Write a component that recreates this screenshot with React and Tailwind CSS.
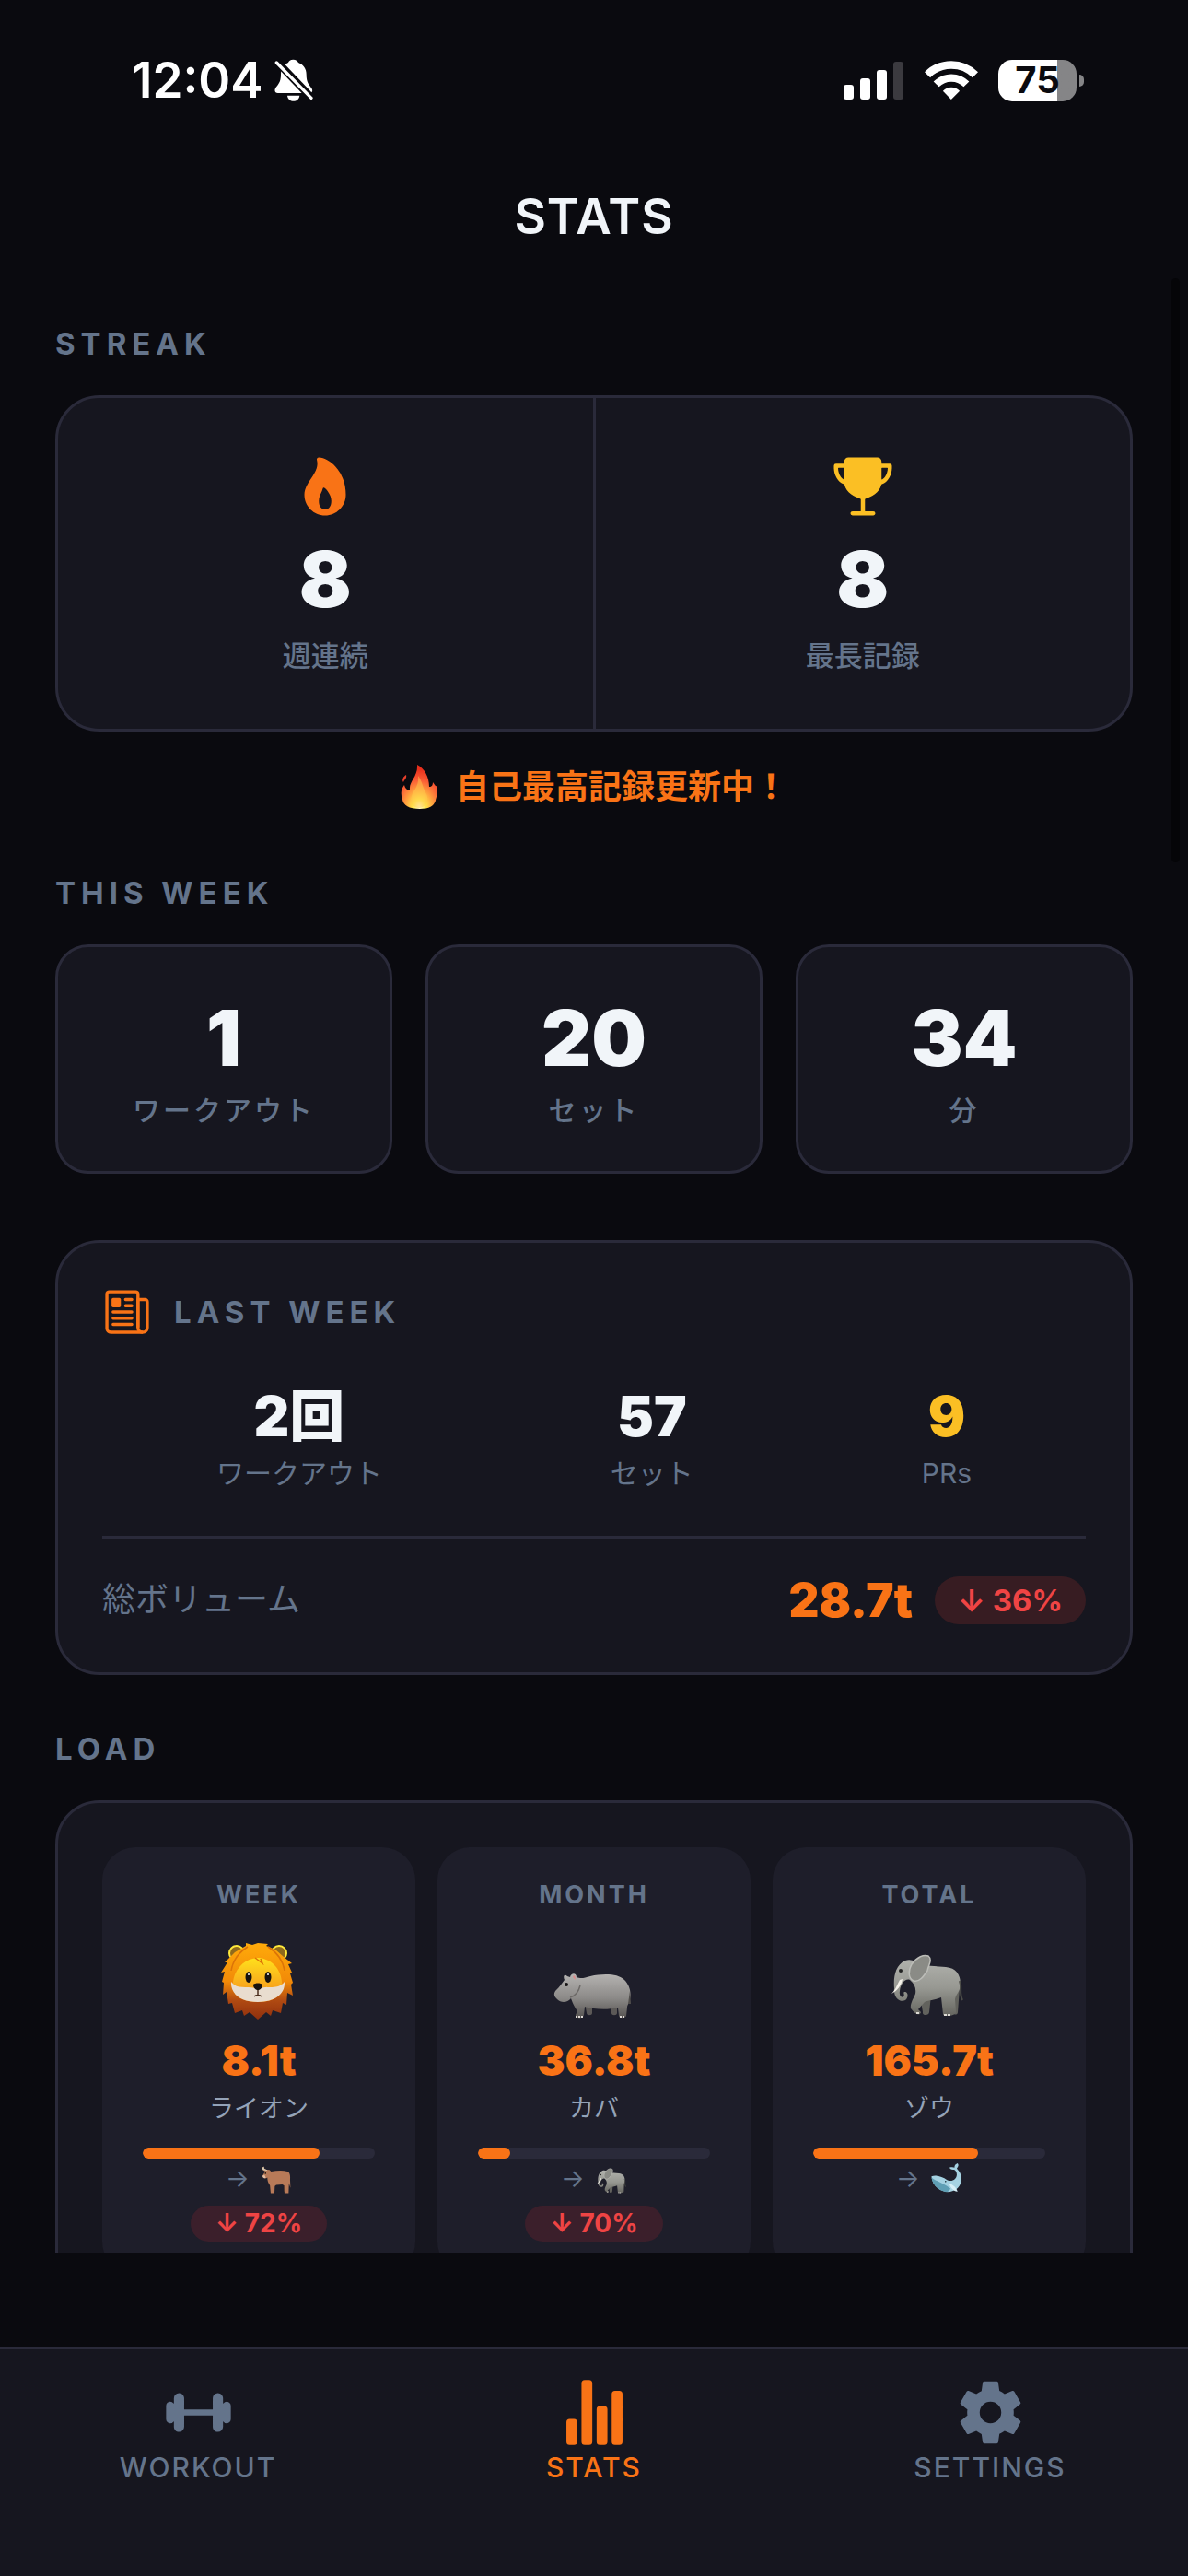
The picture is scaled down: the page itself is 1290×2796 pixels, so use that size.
import {
  IoFlame,
  IoTrophy,
  IoNewspaperOutline,
  IoBarbell,
  IoStatsChart,
  IoSettingsSharp,
} from "react-icons/io5";

const BellOff = () => (
  <svg viewBox="0 0 126 138" className="h-[46px] w-[42px]" aria-hidden="true">
    <path
      d="M61 2 C52 2 47 6 45 12 C29 19 21 32 21 50 C21 76 12 82 4 94 C-2 104 3 111 11 111 H113 C124 111 126 103 121 95 C112 82 104 76 104 50 C104 32 95 19 78 12 C75 6 70 2 61 2 Z"
      fill="#fff"
    />
    <path d="M42 119 H82 C80 131 72 137 62 137 C52 137 44 131 42 119 Z" fill="#fff" />
    <path d="M-4 -4 L132 138" stroke="#0a0a0f" strokeWidth="25" />
    <path d="M7 12 L120 127" stroke="#fff" strokeWidth="10" strokeLinecap="round" />
  </svg>
);

const Signal = () => (
  <svg viewBox="0 0 65 41" className="h-[41px] w-[65px]" aria-hidden="true">
    <rect x="0" y="25" width="11" height="16" rx="3" fill="#fff" />
    <rect x="18" y="18" width="11" height="23" rx="3" fill="#fff" />
    <rect x="36" y="9" width="11" height="32" rx="3" fill="#fff" />
    <rect x="54" y="0" width="11" height="41" rx="3" fill="#3b3a3f" />
  </svg>
);

const Wifi = () => (
  <svg viewBox="0 0 175 127" className="h-[42px] w-[58px]" aria-hidden="true">
    <path d="M9 46 A111 111 0 0 1 166 46" fill="none" stroke="#fff" strokeWidth="26" />
    <path d="M38 77 A69 69 0 0 1 137 77" fill="none" stroke="#fff" strokeWidth="25" />
    <path d="M87 127 L60 99 A38 38 0 0 1 115 99 Z" fill="#fff" />
  </svg>
);

const Lion = ({ className }) => (
  <svg viewBox="0 0 80 84" className={className} role="img" aria-label="Lion">
    <defs>
      <linearGradient id="mane" x1="0" y1="0" x2="0" y2="1">
        <stop offset="0" stopColor="#ffab0a" />
        <stop offset="0.5" stopColor="#f28a08" />
        <stop offset="0.75" stopColor="#b04a12" />
        <stop offset="1" stopColor="#8f2f0d" />
      </linearGradient>
      <linearGradient id="lionFace" x1="0" y1="0" x2="0" y2="1">
        <stop offset="0" stopColor="#ffe11c" />
        <stop offset="0.6" stopColor="#f9ab1c" />
        <stop offset="1" stopColor="#f08c14" />
      </linearGradient>
    </defs>
    <circle cx="18" cy="12" r="8" fill="#8f6a1c" stroke="#ffe93b" strokeWidth="2" />
    <circle cx="64" cy="12" r="8" fill="#8f6a1c" stroke="#ffe93b" strokeWidth="2" />
    <path
      d="M28 1 L35 3 L41 1 L52 2 L50 4 L60 8 L69 16 L78 23 L74 24 L78 33 L76 34 L79 44 L77 46 L79 58 L73 55 L72 68 L68 66 L66 77 L57 74 L55 80 L50 76 L41 84 L32 76 L26 80 L24 74 L16 77 L13 66 L9 67 L7 54 L3 57 L4 44 L2 43 L5 32 L1 33 L8 22 L5 22 L16 11 L28 4 Z"
      fill="url(#mane)"
    />
    <path
      d="M41 17 C57 18 66 30 67 43 C70 58 58 65 41 65 C24 65 11 58 14 43 C16 29 26 18 41 17 Z"
      fill="url(#lionFace)"
    />
    <path
      d="M12 43 C20 53 30 46 41 51 C52 46 62 53 70 43 C71 56 60 65 41 65 C22 65 11 56 12 43 Z"
      fill="#e9ddcf"
    />
    <ellipse cx="31" cy="38" rx="3.500" ry="6" fill="#17130f" />
    <ellipse cx="52" cy="38" rx="3.500" ry="6" fill="#17130f" />
    <circle cx="31" cy="35" r="1" fill="#fff" />
    <circle cx="52" cy="35" r="1" fill="#fff" />
    <path d="M36 46 C38 44 44 44 46 46 C46 50 43 52 41 52 C39 52 36 50 36 46 Z" fill="#17130f" />
    <path d="M41 52 V57 M37 59 C39 57 43 57 45 59" fill="none" stroke="#4a2c1c" strokeWidth="1.500" />
    <path
      d="M30 5 C22 10 14 19 12 31 M52 5 C60 10 68 19 70 31 M44 18 L46 23 L38 17"
      fill="none"
      stroke="#dc7408"
      strokeWidth="1.500"
    />
  </svg>
);

const Hippo = ({ className }) => (
  <svg viewBox="0 0 84 84" className={className} role="img" aria-label="Hippo">
    <defs>
      <linearGradient id="hippoSkin" x1="0" y1="0" x2="0" y2="1">
        <stop offset="0" stopColor="#b5b3b1" />
        <stop offset="0.55" stopColor="#8c8a88" />
        <stop offset="1" stopColor="#555250" />
      </linearGradient>
    </defs>
    <path d="M34 66 H42 V77 C42 80 36 80 36 77 Z M62 66 H69 V77 C69 80 63 80 63 77 Z" fill="#5c5957" />
    <path
      d="M3 52 C7 48 9 45 12 41 C10 37 12 34 15 37 L18 38 C19 33 25 33 25 38 C30 40 33 39 40 37 C54 34 70 34 77 41 C82 46 85 54 83 62 C82 67 80 68 80 71 L79 80 C78 83 71 83 71 80 L70 71 C58 74 44 73 34 70 L33 79 C32 84 23 83 24 79 L26 75 C22 69 20 64 19 61 C15 66 8 66 4 62 C0 59 0 55 3 52 Z"
      fill="url(#hippoSkin)"
    />
    <path d="M83 53 L84 67 L81 67 Z" fill="#504d4b" />
    <path d="M21 38 C22 35 24 36 24 41 Z" fill="#d98c8c" />
    <circle cx="14" cy="46" r="2" fill="#151313" />
    <path d="M18 60 C22 59 27 55 29 47" fill="none" stroke="#6d6a68" strokeWidth="1.500" />
    <path d="M24 81 H32 M72 81 H78" stroke="#ded9d5" strokeWidth="2" strokeDasharray="2 1" />
  </svg>
);

const Elephant = ({ className }) => (
  <svg viewBox="0 0 84 84" className={className} role="img" aria-label="Elephant">
    <defs>
      <linearGradient id="elephantSkin" x1="0" y1="0" x2="0" y2="1">
        <stop offset="0" stopColor="#b0b1ac" />
        <stop offset="0.5" stopColor="#979892" />
        <stop offset="1" stopColor="#65655f" />
      </linearGradient>
    </defs>
    <path d="M34 58 H46 L44 76 C44 80 36 80 37 76 Z M66 50 H77 L75 76 C75 80 68 79 69 75 Z" fill="#62625d" />
    <path
      d="M18 20 C23 18 30 20 34 25 L62 27 C73 28 78 35 78 46 C78 53 73 56 72 62 L73 76 C72 81 58 81 59 78 L57 60 C50 63 42 63 39 65 L32 73 L35 76 C34 80 29 79 24 72 C23 67 27 61 29 56 C30 50 28 45 23 41 C18 39 13 45 12 53 C11 58 14 61 16 59 C18 57 15 55 17 54 C21 53 22 60 18 63 C12 66 5 60 6 50 C5 38 7 25 18 20 Z"
      fill="url(#elephantSkin)"
    />
    <path
      d="M25 24 C31 16 38 13 43 15 C48 19 43 25 42 31 C38 37 33 44 27 42 C21 39 21 31 25 24 Z"
      fill="#8a8b86"
      stroke="#bcbdb8"
      strokeWidth="1.500"
    />
    <path d="M15 40 C14 47 9 53 3 56 C8 51 9 46 12 41 Z" fill="#f4f1ea" />
    <circle cx="13" cy="31" r="2" fill="#222" />
    <path d="M77 42 C80 49 76 55 80 63" fill="none" stroke="#4d4e49" strokeWidth="2" />
    <path d="M30 77 H34 M60 79 H67" stroke="#dcdad4" strokeWidth="2" strokeDasharray="3 1" />
  </svg>
);

const Ox = ({ className }) => (
  <svg viewBox="0 0 84 84" className={className} role="img" aria-label="Ox">
    <path d="M28 52 H37 L35 76 H30 Z M62 50 H70 L68 76 H63 Z" fill="#6e4632" />
    <path
      d="M5 34 L12 22 L6 18 C3 12 6 9 9 9 C8 15 13 17 18 17 L24 18 L28 22 C42 20 58 18 72 22 C79 25 80 34 79 45 L80 66 L76 54 L75 80 H64 L64 60 L58 57 L42 58 L38 61 L37 80 H27 L25 59 C20 53 18 45 18 38 C13 43 6 41 5 34 Z"
      fill="#b87a58"
    />
    <path d="M5 34 L10 31 L14 39 C10 41 6 40 5 34 Z" fill="#e3bfa6" />
    <circle cx="13" cy="27" r="2" fill="#1c1410" />
    <path d="M6 18 C3 12 6 9 9 9 C8 15 13 17 18 17 L16 20 Z" fill="#d8cbb2" />
  </svg>
);

const Whale = ({ className }) => (
  <svg viewBox="0 0 84 84" className={className} role="img" aria-label="Whale">
    <path
      d="M1 35 C14 31 30 36 43 45 C56 51 68 44 69 31 C69 24 67 20 62 17 C54 18 49 15 50 11 C56 10 60 10 63 12 C62 6 66 2 71 0 C75 4 73 10 69 14 C78 23 83 34 81 47 C78 66 63 77 44 77 C21 76 3 58 1 35 Z"
      fill="#a5d2e2"
    />
    <path d="M1 38 C15 49 34 54 52 68 C50 74 45 77 40 77 C19 73 4 57 1 38 Z" fill="#5f9fb5" />
    <path d="M48 54 C60 58 68 66 71 76 C62 77 53 68 48 54 Z" fill="#d8f0f8" />
    <circle cx="39" cy="49" r="2" fill="#17303a" />
  </svg>
);

const Fire = () => (
  <svg viewBox="0 0 40 48" className="h-[48px] w-10" role="img" aria-label="Fire">
    <defs>
      <radialGradient id="fire" cx="0.5" cy="0.95" r="0.85">
        <stop offset="0" stopColor="#fffde0" />
        <stop offset="0.2" stopColor="#ffe84a" />
        <stop offset="0.42" stopColor="#ffa83f" />
        <stop offset="0.7" stopColor="#fb5f36" />
        <stop offset="1" stopColor="#e92f1c" />
      </radialGradient>
    </defs>
    <path
      d="M18 0 C26 4 31 13 31 24 C34 24 35 22 35 19 C38 23 38 24 39 23 C41 32 38 37 38 39 C36 45 31 48 21 48 C9 48 3 44 2 38 C0 32 0 27 4 22 C5 26 7 28 10 27 C9 18 19 13 18 0 Z"
      fill="url(#fire)"
    />
    <path d="M6 11 C7 15 4 16 3 19 C1 16 3 13 6 11 Z" fill="#e9402c" />
    <path
      d="M19 12 C24 19 24 25 27 30 C31 36 30 46 20 47 C10 46 10 38 13 31 C16 26 20 21 19 12 Z"
      fill="#ffc94d"
      opacity="0.5"
    />
  </svg>
);

const SectionTitle = ({ children }) => (
  <h2 className="text-[33px] leading-[42px] font-bold tracking-[6px] text-[#64748b]">{children}</h2>
);

const StreakItem = ({ icon, value, label }) => (
  <div className="flex flex-1 flex-col items-center py-[60px]">
    {icon}
    <p className="mt-3.5 text-[84px] leading-[102px] font-black">{value}</p>
    <p className="mt-3 text-[31px] leading-[39px] font-medium text-[#64748b]">{label}</p>
  </div>
);

const WeekCard = ({ value, label }) => (
  <div className="flex flex-1 flex-col items-center rounded-[36px] border-3 border-[#2a2a3a] bg-[#16161f] py-12">
    <p className="text-[84px] leading-[102px] font-black">{value}</p>
    <p className="mt-[9px] text-[30px] leading-9 font-medium tracking-[3px] text-[#64748b]">{label}</p>
  </div>
);

const LastWeekItem = ({ value, label, valueClass }) => (
  <div className="flex flex-col items-center">
    <p className={`text-[60px] leading-[72px] font-black ${valueClass}`}>{value}</p>
    <p className="mt-2 text-[30px] leading-9 text-[#64748b]">{label}</p>
  </div>
);

const LoadCard = ({ period, animal, value, name, progress, next, change }) => (
  <div className="flex h-[464px] flex-1 flex-col items-center rounded-[36px] bg-[#1e1e2a] px-11 pt-9">
    <h3 className="text-[27px] leading-8 font-bold tracking-[3px] text-[#64748b]">{period}</h3>
    <div className="mt-8 flex h-[90px] items-center pr-1">{animal}</div>
    <p className="mt-3.5 text-[45px] leading-[56px] font-black text-[#f97316]">{value}</p>
    <p className="mt-1.5 text-[27px] leading-9 text-[#94a3b8]">{name}</p>
    <div className="mt-6 h-3 w-full overflow-hidden rounded-full bg-[#2a2a3a]">
      <div className="h-full rounded-full bg-[#f97316]" style={{ width: `${progress}%` }} />
    </div>
    <div className="mt-1 flex h-9 items-center gap-3 text-[27px] text-[#64748b]">
      <span>→</span>
      {next}
    </div>
    {change && (
      <p className="mt-[11px] rounded-full bg-[#3b1f2b] px-[27px] text-[28px] leading-[39px] font-bold text-[#ef4444]">
        {change}
      </p>
    )}
  </div>
);

const TabButton = ({ icon, label, active }) => (
  <button
    type="button"
    aria-current={active ? "page" : undefined}
    className={`flex flex-1 flex-col items-center gap-1 text-[75px] ${active ? "text-[#f97316]" : "text-[#64748b]"}`}
  >
    {icon}
    <span className="text-[30px] leading-9 font-medium tracking-[2px]">{label}</span>
  </button>
);

export default function App() {
  return (
    <div className="relative flex h-screen flex-col bg-[#0a0a0f] font-['Inter','Noto_Sans_CJK_JP',sans-serif] text-[#f1f5f9]">
      {/* Status bar */}
      <div className="flex shrink-0 items-center justify-between pt-[54px] pr-[113px] pl-[143px] text-white">
        <div className="flex items-center gap-3">
          <span className="text-[53px] leading-[66px] font-semibold">12:04</span>
          <BellOff />
        </div>
        <div className="flex items-center">
          <Signal />
          <div className="ml-[23px]">
            <Wifi />
          </div>
          <div className="ml-[22px] flex h-[45px] w-[85px] items-center justify-center rounded-[15px] bg-linear-to-r from-white from-75% to-[#858587] to-75% text-[40px] leading-none font-bold text-[#0a0a0f]">
            75
          </div>
          <div className="ml-[3px] h-[13px] w-[5px] rounded-r-full bg-[#858587]" />
        </div>
      </div>

      <h1 className="mt-[82px] shrink-0 text-center text-[53px] leading-[66px] font-semibold tracking-[1px]">STATS</h1>

      {/* Scroll area, cut off above the tab bar */}
      <main className="mt-[84px] mb-[102px] min-h-0 flex-1 overflow-hidden px-[60px]">
        <SectionTitle>STREAK</SectionTitle>
        <section className="mt-[35px] flex rounded-[48px] border-3 border-[#2a2a3a] bg-[#16161f]">
          <StreakItem icon={<IoFlame className="text-[72px] text-[#f97316]" />} value="8" label="週連続" />
          <div className="w-[3px] bg-[#2a2a3a]" />
          <StreakItem icon={<IoTrophy className="text-[72px] text-[#fbbf24]" />} value="8" label="最長記録" />
        </section>

        <p className="mt-9 flex h-12 items-center justify-center gap-5 text-[36px] font-semibold text-[#f97316]">
          <Fire />
          自己最高記録更新中！
        </p>

        <div className="mt-[70px]">
          <SectionTitle>THIS WEEK</SectionTitle>
        </div>
        <section className="mt-[35px] flex gap-9">
          <WeekCard value="1" label="ワークアウト" />
          <WeekCard value="20" label="セット" />
          <WeekCard value="34" label="分" />
        </section>

        <section className="mt-[72px] rounded-[48px] border-3 border-[#2a2a3a] bg-[#16161f] p-12">
          <div className="flex items-center gap-6">
            <IoNewspaperOutline className="text-[54px] text-[#f97316]" />
            <SectionTitle>LAST WEEK</SectionTitle>
          </div>
          <div className="mt-[50px] flex justify-around">
            <LastWeekItem value="2回" label="ワークアウト" valueClass="text-[#f1f5f9]" />
            <LastWeekItem value="57" label="セット" valueClass="text-[#f1f5f9]" />
            <LastWeekItem value="9" label="PRs" valueClass="text-[#fbbf24]" />
          </div>
          <div className="mt-[50px] flex items-center justify-between border-t-3 border-[#2a2a3a] pt-9">
            <span className="text-[36px] leading-[61px] text-[#64748b]">総ボリューム</span>
            <div className="flex items-center gap-6">
              <span className="text-[51px] leading-[61px] font-black text-[#f97316]">28.7t</span>
              <span className="rounded-full bg-[#371c22] px-[25px] text-[33px] leading-[52px] font-bold text-[#ef4444]">
                ↓ 36%
              </span>
            </div>
          </div>
        </section>

        <div className="mt-[59px]">
          <SectionTitle>LOAD</SectionTitle>
        </div>
        <section className="mt-[35px] flex gap-6 rounded-[48px] border-3 border-[#2a2a3a] bg-[#16161f] p-12">
          <LoadCard
            period="WEEK"
            animal={<Lion className="h-[84px] w-20" />}
            value="8.1t"
            name="ライオン"
            progress={76}
            next={<Ox className="size-[34px]" />}
            change="↓ 72%"
          />
          <LoadCard
            period="MONTH"
            animal={<Hippo className="size-[84px]" />}
            value="36.8t"
            name="カバ"
            progress={14}
            next={<Elephant className="size-[34px]" />}
            change="↓ 70%"
          />
          <LoadCard
            period="TOTAL"
            animal={<Elephant className="size-[84px]" />}
            value="165.7t"
            name="ゾウ"
            progress={71}
            next={<Whale className="size-[34px]" />}
          />
        </section>
      </main>

      {/* Scroll indicator */}
      <div className="absolute top-[302px] right-[9px] h-[634px] w-[9px] rounded-full bg-[#050508]" />

      <nav className="flex h-[249px] shrink-0 items-start border-t-3 border-[#2a2a3a] bg-[#16161f] pt-[31px]">
        <TabButton icon={<IoBarbell />} label="WORKOUT" />
        <TabButton icon={<IoStatsChart />} label="STATS" active />
        <TabButton icon={<IoSettingsSharp />} label="SETTINGS" />
      </nav>
    </div>
  );
}
